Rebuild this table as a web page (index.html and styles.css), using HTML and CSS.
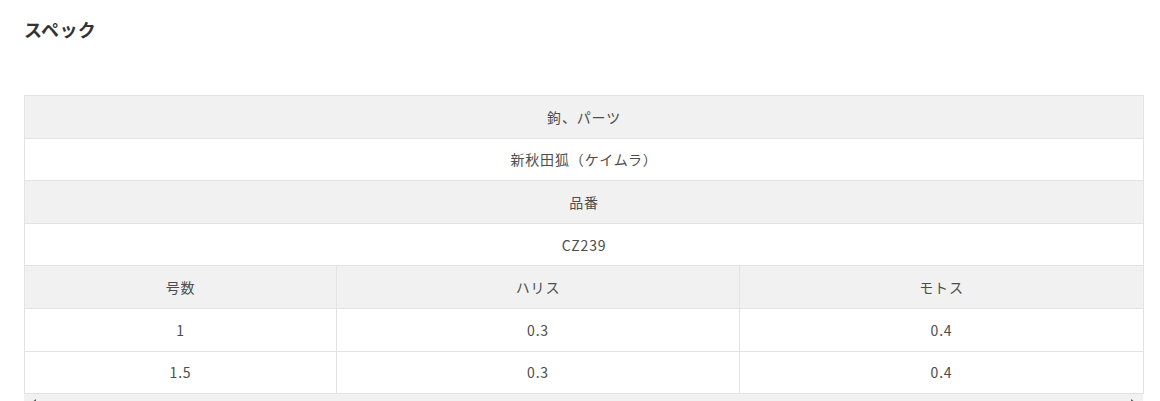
FILE: index.html
```html
<!DOCTYPE html>
<html lang="ja">
<head>
<meta charset="utf-8">
<link rel="stylesheet" href="styles.css">
</head>
<body>
<div class="page">
  <h2 class="title">スペック</h2>
  <div class="table-wrap">
    <table class="spec">
      <colgroup>
        <col class="c1"><col class="c2"><col class="c3">
      </colgroup>
      <tbody>
        <tr class="shade"><td colspan="3">鉤、パーツ</td></tr>
        <tr><td colspan="3">新秋田狐（ケイムラ）</td></tr>
        <tr class="shade"><td colspan="3">品番</td></tr>
        <tr><td colspan="3">CZ239</td></tr>
        <tr class="shade"><td>号数</td><td>ハリス</td><td>モトス</td></tr>
        <tr><td>1</td><td>0.3</td><td>0.4</td></tr>
        <tr><td>1.5</td><td>0.3</td><td>0.4</td></tr>
      </tbody>
    </table>
    <div class="scrollbar">
      <svg class="arrow" width="8" height="8" viewBox="0 0 8 8"><path d="M6 0 L1 4 L6 8 Z" fill="#555"/></svg>
      <svg class="arrow" width="8" height="8" viewBox="0 0 8 8"><path d="M2 0 L7 4 L2 8 Z" fill="#555"/></svg>
    </div>
  </div>
</div>
</body>
</html>
```

FILE: styles.css
```css
html, body {
  margin: 0;
  padding: 0;
  background: #fff;
}
body {
  font-family: "Noto Sans CJK JP", "Noto Sans", sans-serif;
  color: #444;
}
.page {
  padding: 17px 17px 0 24px;
}
.title {
  margin: 0;
  font-size: 18px;
  line-height: 24px;
  font-weight: bold;
  color: #333;
  letter-spacing: 0.02em;
}
.table-wrap {
  margin-top: 54px;
  width: 1119px;
}
.spec {
  width: 1119px;
  border-collapse: collapse;
  table-layout: fixed;
  font-size: 14px;
  letter-spacing: 0.06em;
}
.c1 { width: 312px; }
.c2 { width: 403px; }
.c3 { width: 404px; }
.spec td {
  border: 1px solid #e3e3e3;
  text-align: center;
  height: 42.6px;
  padding: 0 8px;
  box-sizing: border-box;
  line-height: 20px;
  color: #4d4d4d;
}
.spec tr.shade td {
  background: #f1f1f1;
}
.scrollbar {
  height: 17px;
  background: #f1f1f1;
  display: flex;
  justify-content: space-between;
  align-items: center;
  padding: 0 6px;
}
.arrow {
  display: block;
}
```
